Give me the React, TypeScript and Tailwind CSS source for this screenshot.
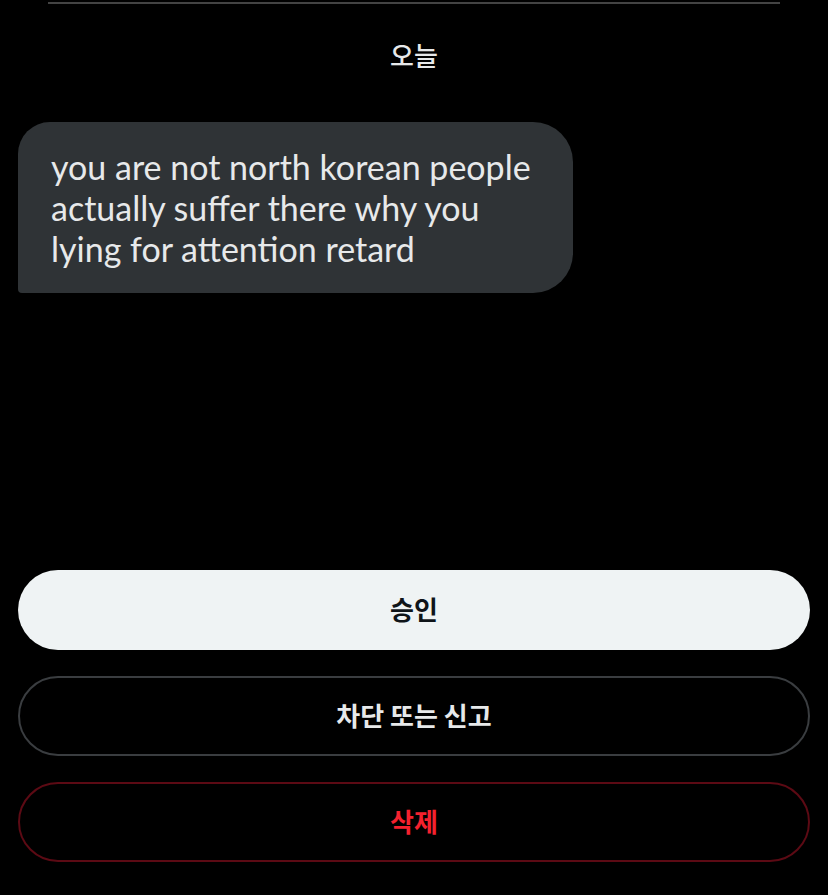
import React from 'react';

export default function App() {
  return (
    <div
      className="flex h-screen w-full flex-col bg-black"
      style={{ fontFamily: 'Lato, "Noto Sans CJK KR", sans-serif' }}
    >
      {/* top divider */}
      <div className="mx-12 mt-[2px] h-[2px] bg-[#434343]" />

      {/* date label */}
      <div className="mt-[35px] text-center text-[26px] font-medium leading-8 text-[#e7e9ea] [font-family:'Noto_Sans_CJK_KR',sans-serif]">
        오늘
      </div>

      {/* message bubble */}
      <div className="mt-[51px] px-[18px]">
        <div className="w-[555px] rounded-[32px] rounded-bl-[4px] rounded-r-[40px] bg-[#2f3336] px-[33px] pb-[24px] pt-[24px] text-[34px] leading-[41px] text-[#e7e9ea]">
          you are not north korean people
          <br />
          actually suffer there why you
          <br />
          lying for attention retard
        </div>
      </div>

      {/* actions */}
      <div className="mt-auto flex flex-col gap-[26px] px-[18px] pb-[33px] [font-family:'Noto_Sans_CJK_KR',sans-serif]">
        <button className="h-20 w-full rounded-full bg-[#eff3f4] pb-1 text-[26px] font-bold text-[#0f1419]">
          승인
        </button>
        <button className="h-20 w-full rounded-full border-2 border-[#3a3d40] pb-1 text-[26px] font-bold text-[#e7e9ea]">
          차단 또는 신고
        </button>
        <button className="h-20 w-full rounded-full border-2 border-[#5c0a14] pb-1 text-[26px] font-bold text-[#f4212e]">
          삭제
        </button>
      </div>
    </div>
  );
}
